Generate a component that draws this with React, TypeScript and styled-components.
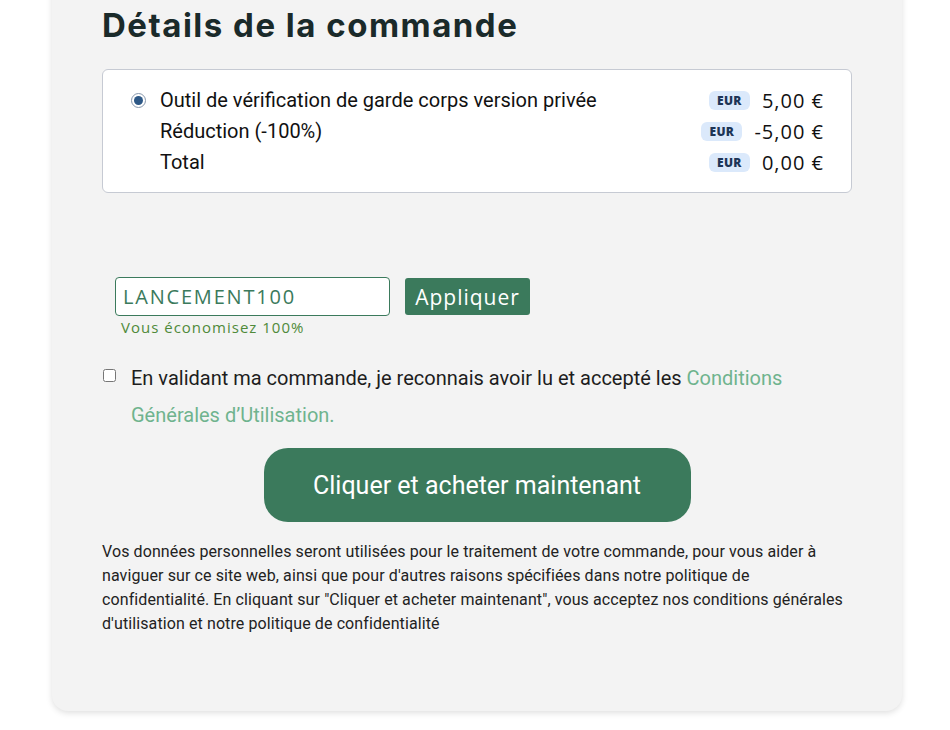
import React from "react";
import styled, { createGlobalStyle } from "styled-components";

const Global = createGlobalStyle`
  html, body { margin: 0; padding: 0; background: #ffffff; }
  body { font-family: Roboto, "Liberation Sans", sans-serif; overflow: hidden; }
  * { box-sizing: border-box; }
`;

const Page = styled.div`
  width: 950px;
  height: 730px;
  overflow: hidden;
  padding-left: 52px;
`;

const Card = styled.section`
  width: 850px;
  margin-top: -30px;
  background: #f3f3f3;
  border-radius: 16px;
  box-shadow: 0 2px 6px rgba(0, 0, 0, 0.13);
  padding: 35px 50px 75px 50px;
  display: flex;
  flex-direction: column;
`;

const Title = styled.h1`
  margin: 0 0 24px 0;
  font-family: Inter, "Open Sans", sans-serif;
  font-weight: 700;
  font-size: 33px;
  line-height: 40px;
  color: #1a2a2a;
  letter-spacing: 1.5px;
`;

const OrderBox = styled.div`
  background: #ffffff;
  border: 1px solid #c6cad3;
  border-radius: 6px;
  padding: 15px 27px 14px 28px;
  display: flex;
  flex-direction: column;
`;

const Row = styled.div`
  display: flex;
  align-items: center;
  height: 31px;
`;

const Lead = styled.div`
  width: 29px;
  flex: none;
  display: flex;
  align-items: center;
`;

const Label = styled.div`
  flex: 1;
  font-family: Roboto, sans-serif;
  font-size: 20px;
  line-height: 31px;
  color: #111;
`;

const Radio = styled.span`
  width: 15px;
  height: 15px;
  border-radius: 50%;
  border: 1.5px solid #8797ac;
  display: flex;
  align-items: center;
  justify-content: center;
  &::after {
    content: "";
    width: 9px;
    height: 9px;
    border-radius: 50%;
    background: #2d5886;
  }
`;

const Badge = styled.span`
  display: inline-flex;
  align-items: center;
  justify-content: center;
  width: 41px;
  height: 19px;
  border-radius: 6px;
  background: #dbe9fb;
  color: #1d3556;
  font-family: "Open Sans", sans-serif;
  font-weight: 800;
  font-size: 12px;
  letter-spacing: 0.3px;
  margin-right: 12px;
`;

const Price = styled.span`
  font-family: "Open Sans", sans-serif;
  font-size: 20px;
  letter-spacing: 1px;
  line-height: 31px;
  color: #111;
`;

const CouponRow = styled.div`
  margin-top: 84px;
  padding-left: 13px;
  display: flex;
  align-items: center;
  gap: 15px;
`;

const CouponInput = styled.input`
  width: 275px;
  height: 39px;
  border: 1px solid #3b7a5c;
  border-radius: 4px;
  background: #fff;
  padding: 0 7px;
  font-family: "Open Sans", sans-serif;
  font-size: 20px;
  letter-spacing: 1.8px;
  color: #3b7a5c;
  outline: none;
`;

const ApplyButton = styled.button`
  width: 125px;
  height: 37px;
  border: none;
  border-radius: 3px;
  background: #3b7a5c;
  color: #fff;
  font-family: "Open Sans", sans-serif;
  font-size: 21px;
  letter-spacing: 1px;
  padding: 0;
  cursor: pointer;
`;

const Saving = styled.div`
  margin: 1px 0 0 19px;
  font-family: "Open Sans", sans-serif;
  font-size: 15px;
  letter-spacing: 1px;
  line-height: 20px;
  color: #4f8a3a;
`;

const TermsRow = styled.label`
  margin-top: 23px;
  display: flex;
  align-items: flex-start;
  gap: 15px;
`;

const Check = styled.input`
  margin: 9px 0 0 1px;
  width: 13px;
  height: 13px;
  flex: none;
`;

const TermsText = styled.span`
  font-family: Roboto, sans-serif;
  font-size: 20px;
  line-height: 37px;
  color: #1d1d1d;
`;

const TermsLink = styled.a`
  color: #6fb38e;
  text-decoration: none;
`;

const BuyButton = styled.button`
  align-self: center;
  margin-top: 14px;
  width: 427px;
  height: 74px;
  border: none;
  border-radius: 24px;
  background: #3b7a5c;
  color: #fff;
  font-family: Roboto, sans-serif;
  font-size: 25px;
  cursor: pointer;
`;

const Legal = styled.p`
  margin: 18px 0 0 0;
  font-family: Roboto, sans-serif;
  font-size: 16px;
  letter-spacing: 0.1px;
  line-height: 24px;
  color: #222;
`;

const rows = [
  { label: "Outil de vérification de garde corps version privée", price: "5,00 €", radio: true },
  { label: "Réduction (-100%)", price: "-5,00 €", radio: false },
  { label: "Total", price: "0,00 €", radio: false },
];

export default function App() {
  return (
    <Page>
      <Global />
      <Card>
        <Title>Détails de la commande</Title>
        <OrderBox>
          {rows.map((r) => (
            <Row key={r.label}>
              <Lead>{r.radio ? <Radio /> : null}</Lead>
              <Label>{r.label}</Label>
              <Badge>EUR</Badge>
              <Price>{r.price}</Price>
            </Row>
          ))}
        </OrderBox>
        <CouponRow>
          <CouponInput defaultValue="LANCEMENT100" />
          <ApplyButton>Appliquer</ApplyButton>
        </CouponRow>
        <Saving>Vous économisez 100%</Saving>
        <TermsRow>
          <Check type="checkbox" />
          <TermsText>
            En validant ma commande, je reconnais avoir lu et accepté les{" "}
            <TermsLink href="#">Conditions Générales d’Utilisation.</TermsLink>
          </TermsText>
        </TermsRow>
        <BuyButton>Cliquer et acheter maintenant</BuyButton>
        <Legal>
          Vos données personnelles seront utilisées pour le traitement de votre commande, pour vous aider à
          naviguer sur ce site web, ainsi que pour d'autres raisons spécifiées dans notre politique de
          confidentialité. En cliquant sur "Cliquer et acheter maintenant", vous acceptez nos conditions générales
          d'utilisation et notre politique de confidentialité
        </Legal>
      </Card>
    </Page>
  );
}
